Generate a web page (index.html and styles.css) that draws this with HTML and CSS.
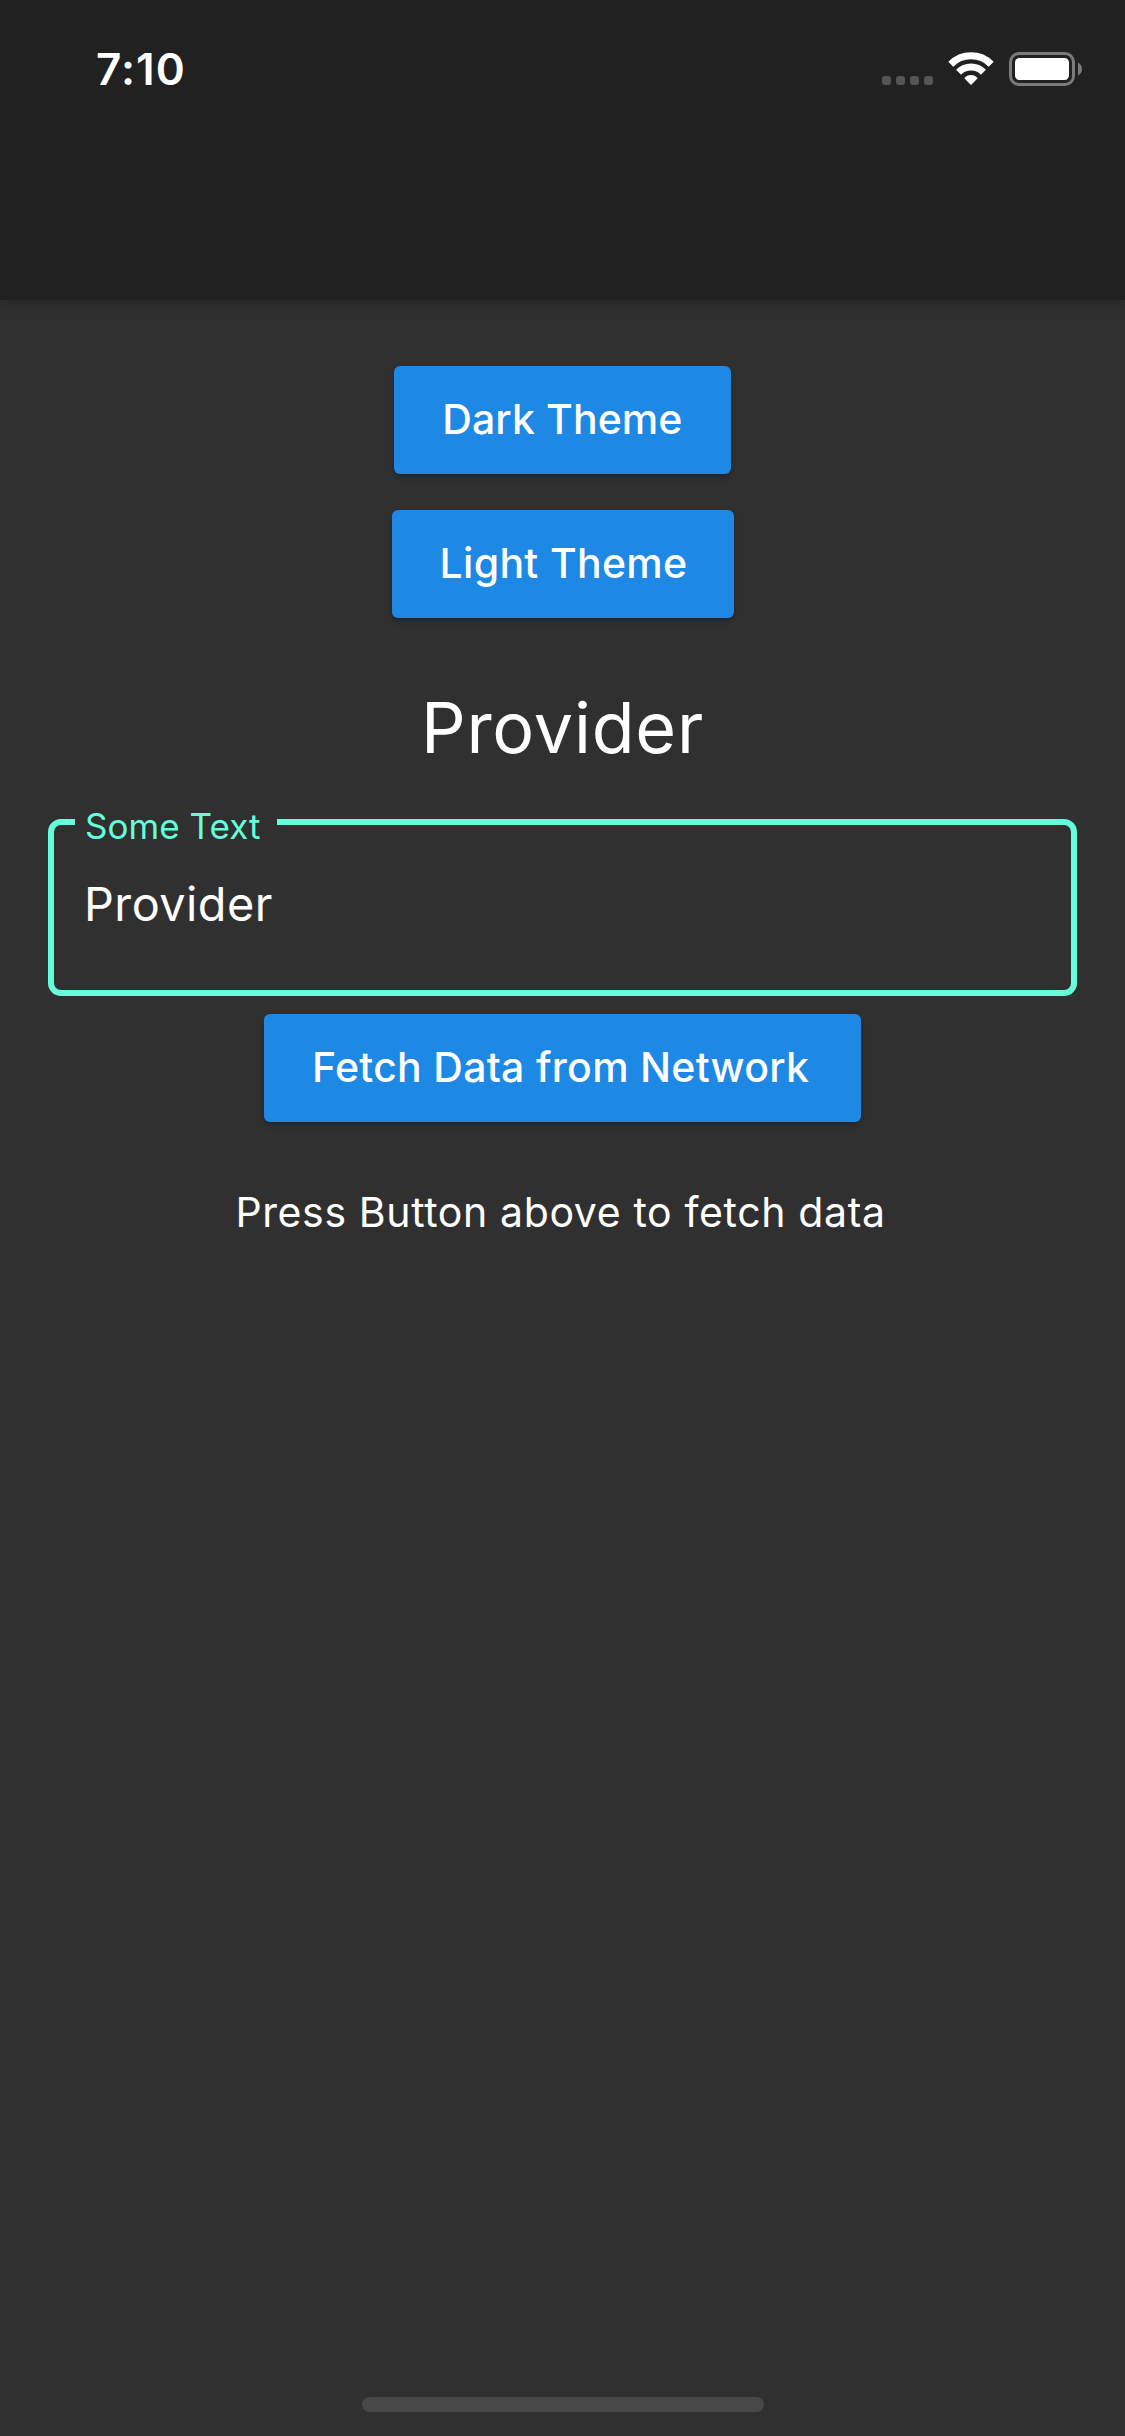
FILE: index.html
```html
<!DOCTYPE html>
<html lang="en">
<head>
  <meta charset="utf-8">
  <title>Provider</title>
  <link rel="stylesheet" href="styles.css">
</head>
<body>
  <header class="app-bar">
    <span class="time">7:10</span>
    <svg class="status-icons" width="200" height="34" viewBox="0 0 200 34">
      <g fill="#555">
        <rect x="0" y="24" width="9" height="9" rx="3"/>
        <rect x="14" y="24" width="9" height="9" rx="3"/>
        <rect x="28" y="24" width="9" height="9" rx="3"/>
        <rect x="42" y="24" width="9" height="9" rx="3"/>
      </g>
      <g fill="none" stroke="#fff" stroke-width="7">
        <path d="M68.8 12.2A28.5 28.5 0 0 1 109.2 12.2"/>
        <path d="M76.6 20.2A17.5 17.5 0 0 1 101.4 20.2"/>
      </g>
      <path d="M89 33L82.3 26.2Q85 23 89 23T95.7 26.2Z" fill="#fff"/>
      <rect x="128.5" y="1.5" width="63" height="31" rx="8.5" fill="none" stroke="#7b7b7b" stroke-width="3"/>
      <rect x="133" y="6" width="54" height="22" rx="4.5" fill="#fff"/>
      <path d="M196 10.5C201.300 13 201.300 21 196 23.500Z" fill="#7b7b7b"/>
    </svg>
  </header>
  <main class="content">
    <button class="button button-dark">Dark Theme</button>
    <button class="button button-light">Light Theme</button>
    <h1 class="heading">Provider</h1>
    <fieldset class="field">
      <legend class="field-label">Some Text</legend>
      <div class="field-value">Provider</div>
    </fieldset>
    <button class="button button-fetch">Fetch Data from Network</button>
    <p class="message">Press Button above to fetch data</p>
  </main>
  <footer class="home-area"><div class="home-indicator"></div></footer>
</body>
</html>
```
FILE: styles.css
```css
* {
  box-sizing: border-box;
}

body {
  margin: 0;
  height: 2436px;
  display: flex;
  flex-direction: column;
  background: #303030;
  color: #fff;
  font-family: Inter, "Liberation Sans", sans-serif;
}

.app-bar {
  display: flex;
  justify-content: space-between;
  align-items: flex-start;
  flex: none;
  height: 300px;
  padding: 42px 43px 0 96px;
  background: #212121;
  box-shadow: 0 4px 14px rgba(0, 0, 0, 0.2);
}

.time {
  font-size: 44px;
  line-height: 54px;
  font-weight: 600;
  letter-spacing: 1.1px;
}

.status-icons {
  margin-top: 10px;
}

.content {
  flex: 1;
  display: flex;
  flex-direction: column;
  align-items: center;
  padding: 66px 48px 0;
}

.button {
  height: 108px;
  margin: 0 0 36px;
  padding: 28px 0 30px 48px;
  border: 0;
  border-radius: 6px;
  background: #1e88e5;
  box-shadow: 0 3px 6px rgba(0, 0, 0, 0.26);
  color: #fff;
  font: 500 41px/50px Inter, "Liberation Sans", sans-serif;
  text-align: left;
  white-space: nowrap;
}

.button-dark {
  width: 336.4px;
  letter-spacing: 0.1px;
}

.button-light {
  width: 342px;
  letter-spacing: 0.32px;
}

.button-fetch {
  width: 597px;
  margin-bottom: 65px;
  letter-spacing: 0.28px;
}

.heading {
  margin: 31px 0 35px;
  font-size: 70px;
  line-height: 85px;
  font-weight: 400;
  letter-spacing: 0.8px;
}

.field {
  width: 100%;
  margin: 0 0 18px;
  padding: 0 21px 58px;
  border: 6px solid #64ffda;
  border-radius: 13px;
}

.field-label {
  width: 202px;
  height: 34px;
  padding: 0 0 0 10px;
  color: #64ffda;
  font-size: 35px;
  line-height: 42px;
  letter-spacing: 0.05px;
  white-space: nowrap;
}

.field-value {
  padding: 37px 0 0 9px;
  font-size: 46.8px;
  line-height: 56px;
  letter-spacing: 0.46px;
}

.message {
  margin: 0;
  padding-right: 4px;
  font-size: 41px;
  line-height: 50px;
  letter-spacing: 0.63px;
}

.home-area {
  display: flex;
  justify-content: center;
  padding: 0 0 24px 1px;
}

.home-indicator {
  width: 402px;
  height: 15px;
  border-radius: 8px;
  background: #484848;
}
```
